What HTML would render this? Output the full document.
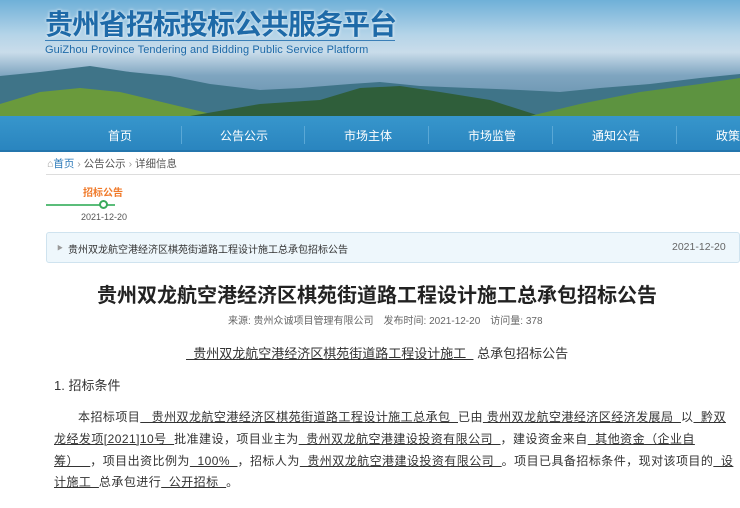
<!DOCTYPE html>
<html><head><meta charset="utf-8"><style>
*{margin:0;padding:0;box-sizing:border-box}
body{width:740px;height:508px;overflow:hidden;background:#fff;font-family:"Liberation Sans","Noto Sans CJK SC",sans-serif;color:#333;position:relative}
.ab{position:absolute;white-space:nowrap}
.banner{position:absolute;left:0;top:0;width:740px;height:116px;background:linear-gradient(180deg,#6fb0d8 0%,#b5d4e8 30%,#c9dcea 45%,#7fa5c0 65%,#5e8aa6 100%);overflow:hidden}
.nav{position:absolute;left:0;top:116px;width:740px;height:36px;background:linear-gradient(#3796cc,#2a85bf);border-bottom:2px solid #2476ad}
.nav span{position:absolute;top:11px;color:#fff;font-size:12px}
.nav i{position:absolute;top:10px;width:1px;height:18px;background:#5aa8d6}
.u{text-decoration:underline}
.p{font-size:12px;color:#333;letter-spacing:0.45px}
</style></head><body>
<div class="banner">
<svg width="740" height="116" style="position:absolute;left:0;top:0">
<path d="M0 76 L40 72 L90 66 L130 72 L170 76 L210 84 L260 90 L300 88 L350 84 L380 82 L420 86 L470 88 L520 90 L560 92 L600 88 L650 84 L700 78 L740 74 L740 116 L0 116Z" fill="#3f7488"/>
<path d="M0 116 L0 104 L40 92 L80 88 L120 92 L170 104 L220 116Z" fill="#6a9a3c"/>
<path d="M190 116 L260 104 L320 100 L360 88 L400 86 L440 92 L490 100 L540 116Z" fill="#2f5e3a"/>
<path d="M530 116 L580 104 L640 92 L700 84 L740 78 L740 116Z" fill="#5d9340"/>
</svg>
<div class="ab" style="left:45px;top:3px;font-size:28px;font-weight:bold;color:#1e6aa8;letter-spacing:-1px;text-shadow:0 0 3px #fff">贵州省招标投标公共服务平台</div>
<div class="ab" style="left:45px;top:40px;width:350px;height:1px;background:#3a7fb8"></div>
<div class="ab" style="left:45px;top:44px;font-size:11px;color:#1e6aa8;letter-spacing:0.1px">GuiZhou Province Tendering and Bidding Public Service Platform</div>
</div>
<div class="nav">
<span style="left:108px">首页</span><i style="left:181px"></i>
<span style="left:220px">公告公示</span><i style="left:304px"></i>
<span style="left:344px">市场主体</span><i style="left:428px"></i>
<span style="left:468px">市场监管</span><i style="left:552px"></i>
<span style="left:592px">通知公告</span><i style="left:676px"></i>
<span style="left:716px">政策</span>
</div>
<div class="ab" style="left:47px;top:156px;font-size:10.5px;color:#555"><span style="color:#999">⌂</span><span style="color:#2a78b8">首页</span> <span style="color:#999">›</span> 公告公示 <span style="color:#999">›</span> 详细信息</div>
<div class="ab" style="left:46px;top:174px;width:694px;height:1px;background:#ddd"></div>
<div class="ab" style="left:83px;top:184px;font-size:10px;font-weight:bold;color:#f07a2a">招标公告</div>
<div class="ab" style="left:46px;top:204px;width:69px;height:2px;background:#5bbd7a"></div>
<div class="ab" style="left:99px;top:200px;width:9px;height:9px;border:2px solid #3aaa5c;border-radius:50%;background:#fff"></div>
<div class="ab" style="left:81px;top:212px;font-size:9px;color:#555">2021-12-20</div>
<div class="ab" style="left:46px;top:232px;width:694px;height:31px;background:#eef7fc;border:1px solid #cfe3ef;border-radius:3px"></div>
<div class="ab" style="left:57px;top:243px;font-size:6px;color:#999">▶</div>
<div class="ab" style="left:68px;top:241px;font-size:10px;color:#333">贵州双龙航空港经济区棋苑街道路工程设计施工总承包招标公告</div>
<div class="ab" style="left:672px;top:241px;font-size:10.5px;color:#666">2021-12-20</div>
<div class="ab" style="left:97px;top:279px;font-size:20px;font-weight:bold;color:#222">贵州双龙航空港经济区棋苑街道路工程设计施工总承包招标公告</div>
<div class="ab" style="left:228px;top:312px;font-size:10px;color:#666">来源: 贵州众诚项目管理有限公司　发布时间: 2021-12-20　访问量: 378</div>
<div class="ab" style="left:186px;top:343px;font-size:13px;color:#333"><span class="u">&nbsp;&nbsp;贵州双龙航空港经济区棋苑街道路工程设计施工&nbsp;&nbsp;</span> 总承包招标公告</div>
<div class="ab" style="left:54px;top:375px;font-size:13px;color:#333">1. 招标条件</div>
<div class="ab p" style="left:78px;top:408px">本招标项目<span class="u">&nbsp;&nbsp;&nbsp;贵州双龙航空港经济区棋苑街道路工程设计施工总承包&nbsp;&nbsp;</span>已由<span class="u">&nbsp;贵州双龙航空港经济区经济发展局&nbsp;&nbsp;</span>以<span class="u">&nbsp;&nbsp;黔双</span></div>
<div class="ab p" style="left:54px;top:430px"><span class="u">龙经发项[2021]10号&nbsp;&nbsp;</span>批准建设，项目业主为<span class="u">&nbsp;&nbsp;贵州双龙航空港建设投资有限公司&nbsp;&nbsp;</span>，建设资金来自<span class="u">&nbsp;&nbsp;其他资金（企业自</span></div>
<div class="ab p" style="left:54px;top:452px"><span class="u">筹）&nbsp;&nbsp;&nbsp;</span>，项目出资比例为<span class="u">&nbsp;&nbsp;100%&nbsp;&nbsp;</span>，招标人为<span class="u">&nbsp;&nbsp;贵州双龙航空港建设投资有限公司&nbsp;&nbsp;</span>。项目已具备招标条件，现对该项目的<span class="u">&nbsp;&nbsp;设</span></div>
<div class="ab p" style="left:54px;top:473px"><span class="u">计施工&nbsp;&nbsp;</span>总承包进行<span class="u">&nbsp;&nbsp;公开招标&nbsp;&nbsp;</span>。</div>
</body></html>
